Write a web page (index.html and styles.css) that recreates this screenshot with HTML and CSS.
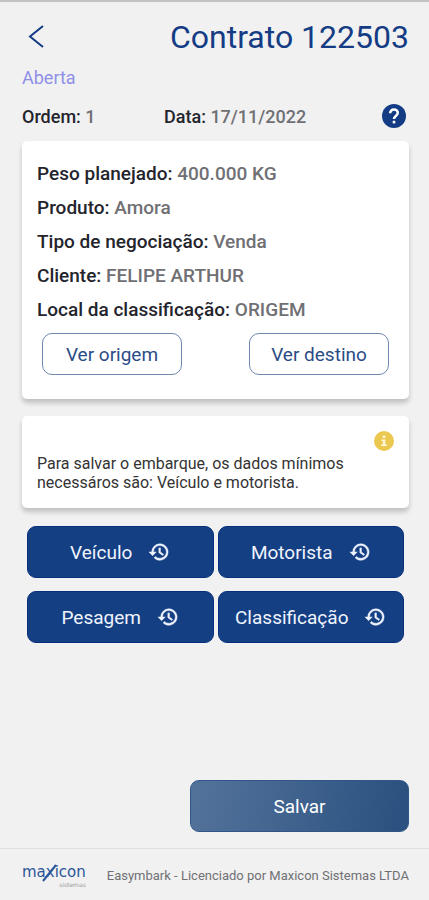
FILE: index.html
```html
<!DOCTYPE html>
<html lang="pt-BR">
<head>
    <meta charset="UTF-8">
    <meta name="viewport" content="width=device-width, initial-scale=1.0">
    <title>Contrato 122503</title>
    <link rel="stylesheet" href="styles.css">
</head>
<body>
    <svg class="sprite" aria-hidden="true">
        <symbol id="history" viewBox="0 0 24 24">
            <path d="M13 3a9 9 0 0 0-9 9H1l4 4 4-4H6a7 7 0 1 1 2.1 4.9l-1.5 1.5A9 9 0 1 0 13 3zm-1.2 4.5v5.2l4.2 3.1 1-1.4-3.4-2.4V7.500z"/>
        </symbol>
    </svg>

    <main class="content">
        <header class="header">
            <a class="back" href="#" aria-label="Voltar">
                <svg width="16" height="24" viewBox="0 0 16 24"><path d="M15 1L2 11.500L15 22"/></svg>
            </a>
            <h1>Contrato 122503</h1>
        </header>
        <p class="status">Aberta</p>

        <div class="summary">
            <p><b>Ordem:</b> 1</p>
            <p><b>Data:</b> 17/11/2022</p>
            <button class="help" type="button" aria-label="Ajuda">
                <svg width="24" height="24" viewBox="0 0 24 24">
                    <circle cx="12" cy="12" r="12"/>
                    <path d="M8.200 9.300C8.200 6.900 9.800 5.500 12 5.500S15.800 7 15.800 9C15.800 11.600 12 11.800 12 15"/>
                    <rect x="10.700" y="16.800" width="2.600" height="2.600"/>
                </svg>
            </button>
        </div>

        <section class="card details">
            <p><b>Peso planejado:</b> 400.000 KG</p>
            <p><b>Produto:</b> Amora</p>
            <p><b>Tipo de negociação:</b> Venda</p>
            <p><b>Cliente:</b> FELIPE ARTHUR</p>
            <p><b>Local da classificação:</b> ORIGEM</p>
            <div class="places">
                <button class="outline" type="button">Ver origem</button>
                <button class="outline" type="button">Ver destino</button>
            </div>
        </section>

        <section class="card notice">
            <svg class="info" width="20" height="20" viewBox="0 0 20 20">
                <circle cx="10" cy="10" r="10"/>
                <path d="M8.700 4.500h2.600v2.600H8.700zM7.500 8.500h3.800v5H13V15H7.200v-1.500h1.700V10H7.500z"/>
            </svg>
            <p>Para salvar o embarque, os dados mínimos necessáros são: Veículo e motorista.</p>
        </section>

        <div class="steps">
            <button type="button">Veículo <svg><use href="#history"/></svg></button>
            <button type="button">Motorista <svg><use href="#history"/></svg></button>
            <button type="button">Pesagem <svg><use href="#history"/></svg></button>
            <button type="button">Classificação <svg><use href="#history"/></svg></button>
        </div>

        <button class="save" type="button">Salvar</button>
    </main>

    <footer class="footer">
        <div class="logo">
            <span class="logo-name">maxicon</span>
            <span class="logo-sub">sistemas</span>
            <svg class="logo-slash" width="18" height="20" viewBox="0 0 18 20"><path d="M2 18L15 2"/></svg>
        </div>
        <p>Easymbark - Licenciado por Maxicon Sistemas LTDA</p>
    </footer>
</body>
</html>
```

FILE: styles.css
```css
* {
    box-sizing: border-box;
}
body {
    display: flex;
    flex-direction: column;
    min-height: 100vh;
    margin: 0;
    border-top: 2px solid #c2c2c2;
    background: #f1f1f1;
    color: #707074;
    font-family: Roboto, "Liberation Sans", sans-serif;
    font-size: 19px;
}
p, h1 {
    margin: 0;
}
button {
    padding: 0;
    border: none;
    font-family: inherit;
    font-size: 19px;
    cursor: pointer;
}
b {
    color: #24242c;
    font-weight: 500;
}
.sprite {
    position: absolute;
    width: 0;
    height: 0;
}
.content {
    display: flex;
    flex: 1;
    flex-direction: column;
    padding: 15px 20px 16px 22px;
}
.header {
    display: flex;
    align-items: center;
    justify-content: space-between;
    height: 40px;
}
.header h1 {
    color: #143c84;
    font-size: 32px;
    font-weight: 400;
}
.back {
    display: flex;
    padding: 0 6px;
}
.back path {
    fill: none;
    stroke: #143c84;
    stroke-width: 2;
}
.status {
    margin-top: 10px;
    color: #8f8fe8;
    font-size: 18px;
    line-height: 22px;
}
.summary {
    display: grid;
    grid-template-columns: 142px 1fr auto;
    align-items: center;
    margin: 15px 3px 13px 0;
    font-size: 18px;
    font-weight: 500;
}
.help {
    display: flex;
    background: none;
}
.help circle {
    fill: #143c84;
}
.help rect {
    fill: #fff;
}
.help path {
    fill: none;
    stroke: #fff;
    stroke-width: 2.500;
}
.card {
    border-radius: 5px;
    background: #fff;
    box-shadow: 0 4px 5px rgba(0, 0, 0, 0.200);
}
.details {
    padding: 16px 20px 24px 15px;
    font-weight: 500;
    line-height: 34px;
}
.places {
    display: flex;
    justify-content: space-between;
    margin: 6px 0 0 5px;
}
.outline {
    width: 140px;
    height: 42px;
    border: 1px solid #6f86ad;
    border-radius: 10px;
    background: #fff;
    color: #2b4c87;
}
.notice {
    display: flex;
    flex-direction: column;
    margin-top: 17px;
    padding: 15px 15px 16px;
    color: #333;
    font-size: 16px;
    line-height: 19px;
}
.notice p {
    max-width: 340px;
    margin-top: 3px;
}
.info {
    align-self: flex-end;
}
.info circle {
    fill: #ebc850;
}
.info path {
    fill: #fff8dc;
}
.steps {
    display: grid;
    grid-template-columns: 1fr 1fr;
    gap: 13px 4px;
    margin: 18px 5px 24px;
}
.steps button {
    display: flex;
    align-items: center;
    justify-content: center;
    gap: 16px;
    height: 52px;
    border: 1px solid #072f7c;
    border-radius: 9px;
    background: #143f82;
    color: #f0f4ff;
}
.steps svg {
    width: 22px;
    height: 22px;
    fill: currentColor;
    stroke: currentColor;
    stroke-width: 0.500;
}
.save {
    align-self: flex-end;
    width: 219px;
    height: 52px;
    margin-top: auto;
    border: 1px solid #2f5687;
    border-radius: 9px;
    background: linear-gradient(100deg, #54739b, #29507f);
    color: #fff;
}
.footer {
    display: flex;
    align-items: center;
    justify-content: space-between;
    height: 52px;
    padding: 2px 20px 0 22px;
    border-top: 1px solid #dedede;
    font-size: 13px;
}
.logo {
    display: flex;
    flex-direction: column;
    position: relative;
    color: #2c5599;
    font-family: "DejaVu Sans", sans-serif;
}
.logo-name {
    font-size: 15px;
    line-height: 17px;
}
.logo-sub {
    align-self: flex-end;
    color: #999;
    font-size: 6px;
    line-height: 7px;
}
.logo-slash {
    position: absolute;
    top: -1px;
    left: 19px;
}
.logo-slash path {
    stroke: #2c5599;
    stroke-width: 2;
}
```
